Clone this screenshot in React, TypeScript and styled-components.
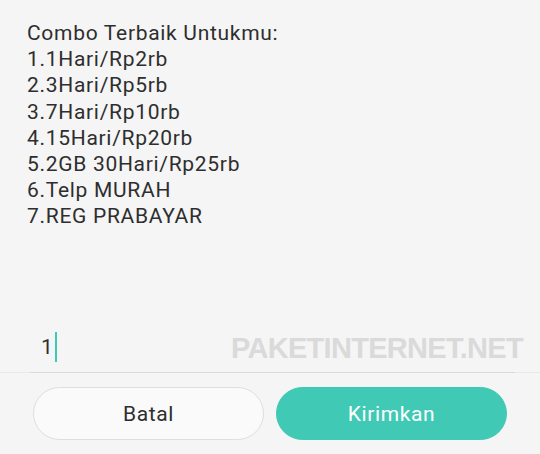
import React from "react";
import styled, { createGlobalStyle } from "styled-components";

const Global = createGlobalStyle`
  html, body { margin: 0; padding: 0; background: #f5f5f5; }
  body { font-family: Roboto, "Noto Sans", sans-serif; }
  * { box-sizing: border-box; }
`;

const Screen = styled.div`
  width: 540px;
  height: 454px;
  display: flex;
  flex-direction: column;
  background: #f5f5f5;
  overflow: hidden;
`;

const Message = styled.div`
  flex: 1;
  padding: 20px 20px 0 27px;
  font-size: 21px;
  letter-spacing: 0.7px;
  line-height: 26.2px;
  color: #2e2e2e;
`;

const Line = styled.div`
  white-space: nowrap;
`;

const InputRow = styled.div`
  position: relative;
  height: 52px;
  display: flex;
  border-bottom: 1px solid #e9e9e9;
`;

const InputField = styled.div`
  flex: 1;
  margin: 0 25px -1px 30px;
  border-bottom: 1px solid #dadada;
  display: flex;
  align-items: center;
  padding: 0 0 0 11px;
  font-size: 21px;
  color: #2e2e2e;
`;

const Caret = styled.span`
  display: inline-block;
  width: 2px;
  height: 30px;
  margin-left: 2px;
  background: #3ec9b6;
`;

const Watermark = styled.div`
  position: absolute;
  right: 17px;
  top: 10px;
  font-family: "Liberation Sans", Arial, sans-serif;
  font-weight: 700;
  font-size: 29px;
  line-height: 34px;
  letter-spacing: -0.7px;
  color: #dadada;
  pointer-events: none;
`;

const Footer = styled.div`
  display: grid;
  grid-template-columns: 1fr 1fr;
  gap: 12px;
  padding: 14px 33px 14px 33px;
`;

const Button = styled.button<{ $primary?: boolean }>`
  height: 53px;
  border-radius: 27px;
  font-family: Roboto, "Noto Sans", sans-serif;
  font-size: 21px;
  letter-spacing: 0.6px;
  border: 1px solid ${(p) => (p.$primary ? "#40c9b5" : "#dedede")};
  background: ${(p) => (p.$primary ? "#40c9b5" : "#fafafa")};
  color: ${(p) => (p.$primary ? "#ffffff" : "#2e2e2e")};
  padding: 0;
  cursor: pointer;
`;

const lines = [
  "Combo Terbaik Untukmu:",
  "1.1Hari/Rp2rb",
  "2.3Hari/Rp5rb",
  "3.7Hari/Rp10rb",
  "4.15Hari/Rp20rb",
  "5.2GB 30Hari/Rp25rb",
  "6.Telp MURAH",
  "7.REG PRABAYAR",
];

export default function App() {
  return (
    <>
      <Global />
      <Screen>
        <Message>
          {lines.map((l) => (
            <Line key={l}>{l}</Line>
          ))}
        </Message>
        <InputRow>
          <InputField>
            1<Caret />
          </InputField>
          <Watermark>PAKETINTERNET.NET</Watermark>
        </InputRow>
        <Footer>
          <Button>Batal</Button>
          <Button $primary>Kirimkan</Button>
        </Footer>
      </Screen>
    </>
  );
}
